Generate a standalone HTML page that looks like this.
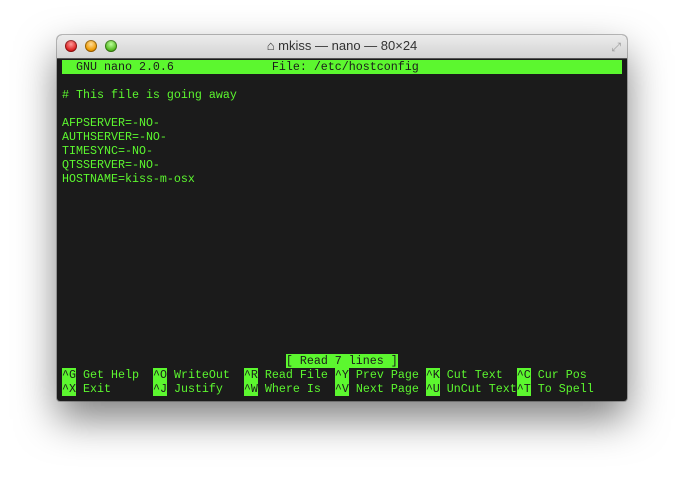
<!DOCTYPE html>
<html><head><meta charset="utf-8"><style>
html,body{margin:0;padding:0;width:684px;height:480px;background:#fff;overflow:hidden}
.win{position:absolute;left:57px;top:35px;width:570px;height:366px;border-radius:5px 5px 3px 3px;background:#1b1b1b;box-shadow:0 18px 40px rgba(0,0,0,.5),0 0 0 1px rgba(0,0,0,.25);overflow:hidden}
.tb{position:absolute;left:0;top:0;width:570px;height:23px;background:linear-gradient(#ececec,#d3d3d3);border-bottom:1px solid #555}
.b{position:absolute;top:5px;width:12px;height:12px;border-radius:50%;box-shadow:inset 0 0 0 1px rgba(0,0,0,.35)}
.t{position:absolute;left:0;right:0;top:3px;text-align:center;font:13px "Liberation Sans",sans-serif;color:#333}
pre{position:absolute;left:5px;top:25px;margin:0;font:11.67px/14px "Liberation Mono",monospace;color:#5cf72f}
.h{background:#5cf72f;color:#1b1b1b}
</style></head><body>
<div class="win">
<div class="tb">
<div class="b" style="left:8px;background:radial-gradient(circle at 50% 35%,#f99,#d22 60%,#a00)"></div>
<div class="b" style="left:28px;background:radial-gradient(circle at 50% 35%,#fd9,#e90 60%,#b60)"></div>
<div class="b" style="left:48px;background:radial-gradient(circle at 50% 35%,#bf9,#5b2 60%,#380)"></div>
<div class="t">⌂ mkiss — nano — 80×24</div>
<div style="position:absolute;right:6px;top:5px;color:#999;font:12px sans-serif">⤢</div>
</div>
<pre><span class="h">  GNU nano 2.0.6              File: /etc/hostconfig                             </span>

# This file is going away

AFPSERVER=-NO-
AUTHSERVER=-NO-
TIMESYNC=-NO-
QTSSERVER=-NO-
HOSTNAME=kiss-m-osx












                                <span class="h">[ Read 7 lines ]</span>
<span class="h">^G</span> Get Help  <span class="h">^O</span> WriteOut  <span class="h">^R</span> Read File <span class="h">^Y</span> Prev Page <span class="h">^K</span> Cut Text  <span class="h">^C</span> Cur Pos
<span class="h">^X</span> Exit      <span class="h">^J</span> Justify   <span class="h">^W</span> Where Is  <span class="h">^V</span> Next Page <span class="h">^U</span> UnCut Text<span class="h">^T</span> To Spell</pre>
</div>
</body></html>
